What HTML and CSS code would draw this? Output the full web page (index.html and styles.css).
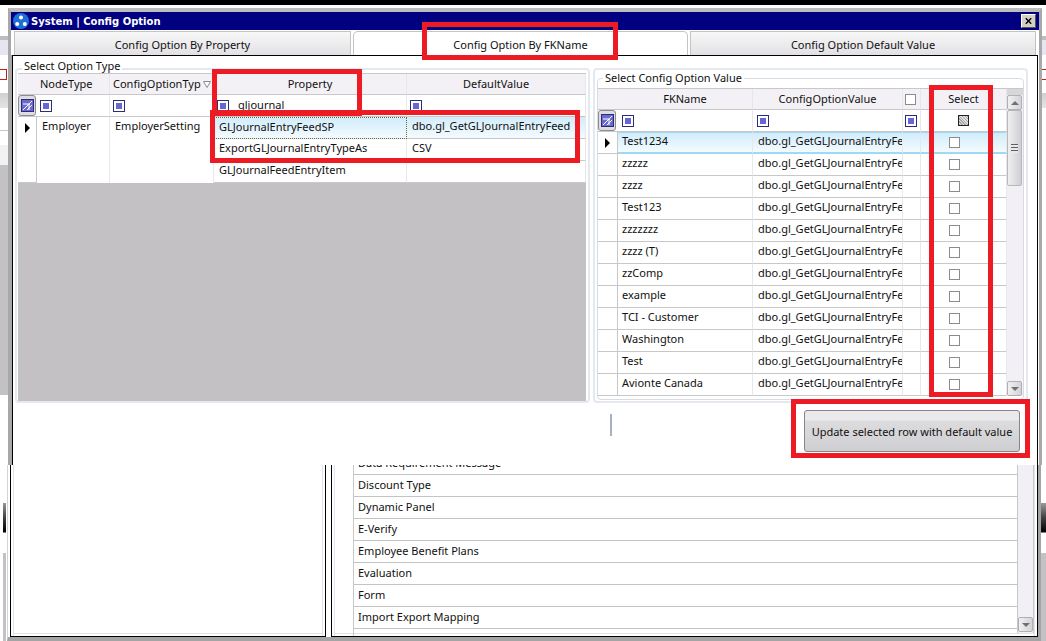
FILE: index.html
```html
<!DOCTYPE html>
<html lang="en">
<head>
    <meta charset="UTF-8">
    <meta name="viewport" content="width=device-width, initial-scale=1.0">
    <title>System | Config Option</title>
    <link rel="stylesheet" href="styles.css">
</head>
<body>
    <div class="top-strip"></div>
    <div class="edge edge-left"><span class="edge-mark"></span></div>
    <div class="edge edge-right"><span class="edge-mark"></span></div>
    <div class="edge-low edge-low-left"></div>
    <div class="edge-low edge-low-right"></div>

    <!-- window behind the dialog -->
    <div class="back-window">
        <div class="pane pane-left"></div>
        <div class="pane pane-right">
            <div class="list">
                <div class="list-row list-row-first">Data Requirement Message</div>
                <div class="list-row">Discount Type</div>
                <div class="list-row">Dynamic Panel</div>
                <div class="list-row">E-Verify</div>
                <div class="list-row">Employee Benefit Plans</div>
                <div class="list-row">Evaluation</div>
                <div class="list-row">Form</div>
                <div class="list-row">Import Export Mapping</div>
                <div class="list-row"></div>
            </div>
            <div class="list-scroll">
                <div class="scroll-btn"><span class="arrow-down"></span></div>
            </div>
        </div>
    </div>

    <!-- dialog -->
    <div class="dialog">
        <div class="titlebar">
            <svg class="logo" viewBox="0 0 16 16">
                <circle cx="8" cy="8" r="8" fill="#1f6fd8"/>
                <circle cx="8" cy="4.5" r="2" fill="#fff"/>
                <circle cx="4.2" cy="11" r="2" fill="#fff"/>
                <circle cx="11.8" cy="11" r="2" fill="#fff"/>
            </svg>
            <span class="title-text">System | Config Option</span>
            <button class="close-btn">
                <svg viewBox="0 0 9 8"><path d="M1 0.5 L8 7.5 M8 0.5 L1 7.5" stroke="#000" stroke-width="1.8"/></svg>
            </button>
        </div>

        <div class="tabs">
            <div class="tab tab-one">Config Option By Property</div>
            <div class="tab tab-two tab-active">Config Option By FKName</div>
            <div class="tab tab-three">Config Option Default Value</div>
        </div>

        <div class="panel">
            <div class="groups">
                <div class="group group-left">
                    <span class="legend legend-left">Select Option Type</span>
                    <div class="grid grid-left">
                        <table class="table table-left">
                            <colgroup>
                                <col class="c-sel">
                                <col class="c-node">
                                <col class="c-type">
                                <col class="c-prop">
                                <col class="c-default">
                            </colgroup>
                            <tr class="head">
                                <th class="blank"></th>
                                <th class="left">NodeType</th>
                                <th class="left">ConfigOptionTyp<svg class="funnel" viewBox="0 0 8 7"><path d="M0.5 0.5 H7.5 L4 6.5 Z" fill="#fff" stroke="#8a8a8a"/></svg></th>
                                <th>Property</th>
                                <th>DefaultValue</th>
                            </tr>
                            <tr class="filter">
                                <td class="sel">
                                    <span class="sel-btn">
                                        <svg viewBox="0 0 13 13"><rect x="0.5" y="0.5" width="12" height="12" fill="#6a6ad0" stroke="#2c2c78"/><path d="M2 11 L11 2 M6 11 L11 6 M2 5 H9 M8 5 V11" stroke="#fff" stroke-width="1" fill="none"/></svg>
                                    </span>
                                </td>
                                <td><span class="fbox"></span></td>
                                <td><span class="fbox"></span></td>
                                <td><span class="fbox"></span><span class="filter-text">gljournal</span></td>
                                <td><span class="fbox"></span></td>
                            </tr>
                            <tr class="row">
                                <td class="sel" rowspan="3"><span class="pointer"></span></td>
                                <td class="plain" rowspan="3">Employer</td>
                                <td class="plain" rowspan="3">EmployerSetting</td>
                                <td class="active focus">GLJournalEntryFeedSP</td>
                                <td class="active">dbo.gl_GetGLJournalEntryFeed</td>
                            </tr>
                            <tr class="row">
                                <td>ExportGLJournalEntryTypeAs</td>
                                <td>CSV</td>
                            </tr>
                            <tr class="row">
                                <td>GLJournalFeedEntryItem</td>
                                <td></td>
                            </tr>
                        </table>
                    </div>
                </div>

                <div class="group group-right">
                    <div class="group-inner">
                        <span class="legend legend-right">Select Config Option Value</span>
                        <div class="grid grid-right">
                            <table class="table table-right">
                                <colgroup>
                                    <col class="r-sel">
                                    <col class="r-name">
                                    <col class="r-value">
                                    <col class="r-check">
                                    <col class="r-select">
                                </colgroup>
                                <tr class="head">
                                    <th class="blank"></th>
                                    <th>FKName</th>
                                    <th>ConfigOptionValue</th>
                                    <th class="check-head"><span class="check head-check"></span></th>
                                    <th>Select</th>
                                </tr>
                                <tr class="filter">
                                    <td class="sel">
                                        <span class="sel-btn">
                                            <svg viewBox="0 0 13 13"><rect x="0.5" y="0.5" width="12" height="12" fill="#6a6ad0" stroke="#2c2c78"/><path d="M2 11 L11 2 M6 11 L11 6 M2 5 H9 M8 5 V11" stroke="#fff" stroke-width="1" fill="none"/></svg>
                                        </span>
                                    </td>
                                    <td><span class="fbox"></span></td>
                                    <td><span class="fbox"></span></td>
                                    <td class="check-head"><span class="fbox"></span></td>
                                    <td class="center"><span class="check check-on"></span></td>
                                </tr>
                                <tr class="row row-active">
                                    <td class="sel"><span class="pointer"></span></td>
                                    <td>Test1234</td>
                                    <td>dbo.gl_GetGLJournalEntryFe</td>
                                    <td></td>
                                    <td class="center"><span class="check"></span></td>
                                </tr>
                                <tr class="row"><td class="sel"></td><td>zzzzz</td><td>dbo.gl_GetGLJournalEntryFe</td><td></td><td class="center"><span class="check"></span></td></tr>
                                <tr class="row"><td class="sel"></td><td>zzzz</td><td>dbo.gl_GetGLJournalEntryFe</td><td></td><td class="center"><span class="check"></span></td></tr>
                                <tr class="row"><td class="sel"></td><td>Test123</td><td>dbo.gl_GetGLJournalEntryFe</td><td></td><td class="center"><span class="check"></span></td></tr>
                                <tr class="row"><td class="sel"></td><td>zzzzzzz</td><td>dbo.gl_GetGLJournalEntryFe</td><td></td><td class="center"><span class="check"></span></td></tr>
                                <tr class="row"><td class="sel"></td><td>zzzz (T)</td><td>dbo.gl_GetGLJournalEntryFe</td><td></td><td class="center"><span class="check"></span></td></tr>
                                <tr class="row"><td class="sel"></td><td>zzComp</td><td>dbo.gl_GetGLJournalEntryFe</td><td></td><td class="center"><span class="check"></span></td></tr>
                                <tr class="row"><td class="sel"></td><td>example</td><td>dbo.gl_GetGLJournalEntryFe</td><td></td><td class="center"><span class="check"></span></td></tr>
                                <tr class="row"><td class="sel"></td><td>TCI - Customer</td><td>dbo.gl_GetGLJournalEntryFe</td><td></td><td class="center"><span class="check"></span></td></tr>
                                <tr class="row"><td class="sel"></td><td>Washington</td><td>dbo.gl_GetGLJournalEntryFe</td><td></td><td class="center"><span class="check"></span></td></tr>
                                <tr class="row"><td class="sel"></td><td>Test</td><td>dbo.gl_GetGLJournalEntryFe</td><td></td><td class="center"><span class="check"></span></td></tr>
                                <tr class="row"><td class="sel"></td><td>Avionte Canada</td><td>dbo.gl_GetGLJournalEntryFe</td><td></td><td class="center"><span class="check"></span></td></tr>
                            </table>
                            <div class="scrollbar">
                                <div class="scroll-cap"></div>
                                <div class="scroll-btn"><span class="arrow-up"></span></div>
                                <div class="scroll-thumb"><span class="grip"></span></div>
                                <div class="scroll-track"></div>
                                <div class="scroll-btn"><span class="arrow-down"></span></div>
                            </div>
                        </div>
                    </div>
                </div>
            </div>

            <div class="actions">
                <span class="splitter"></span>
                <button class="update-btn">Update selected row with default value</button>
            </div>
        </div>
    </div>

    <!-- red annotation boxes drawn on top of the screenshot -->
    <div class="mark mark-tab"></div>
    <div class="mark mark-property"></div>
    <div class="mark mark-rows"></div>
    <div class="mark mark-select"></div>
    <div class="mark mark-button"></div>
</body>
</html>
```

FILE: styles.css
```css
* {
    box-sizing: border-box;
}
html, body {
    margin: 0;
    padding: 0;
}
body {
    position: relative;
    width: 1046px;
    height: 641px;
    overflow: hidden;
    background-color: white;
    color: #101010;
    font-family: "Noto Sans", Tahoma, sans-serif;
    font-size: 11px;
}

/* desktop behind the windows */
.top-strip {
    position: absolute;
    left: 0;
    top: 0;
    width: 100%;
    height: 5px;
    background-color: black;
}
.edge {
    position: absolute;
    top: 5px;
    height: 460px;
    width: 8px;
}
.edge-left {
    left: 0;
    background: linear-gradient(to bottom,
        #fff 0, #fff 31px, #bdbdbd 31px, #bdbdbd 35px,
        #e6e6f2 35px, #e6e6f2 50px, #fff 50px, #fff 88px,
        #d0d0d0 88px, #e4e4e4 103px, #fff 103px, #fff 125px,
        #c8c8c8 125px, #c8c8c8 126px, #fff 126px, #fff 140px,
        #f2f2f2 140px, #f2f2f2 160px, #c3c1c3 160px, #c3c1c3 390px,
        #fff 390px);
}
.edge-right {
    left: 1042px;
    width: 4px;
    background: linear-gradient(to bottom,
        #fff 0, #fff 31px, #bdbdbd 31px, #bdbdbd 35px,
        #e6e6f2 35px, #e6e6f2 50px, #fff 50px, #fff 88px,
        #d0d0d0 88px, #e4e4e4 103px, #fff 103px);
}
.edge-mark {
    position: absolute;
    left: 0;
    top: 64px;
    width: 7px;
    height: 11px;
    border-top: 1px solid #c02020;
    border-bottom: 1px solid #c02020;
    border-right: 1px solid #c02020;
}
.edge-low {
    position: absolute;
    top: 503px;
    height: 138px;
    width: 3px;
    background: linear-gradient(to bottom,
        #9a9a9a 0, #444 14px, #000 29px, #fff 30px, #fff 50px, #c3c1c3 50px);
}
.edge-low-left {
    left: 3px;
}
.edge-low-right {
    left: 1041px;
    width: 5px;
}

/* window behind the dialog */
.back-window {
    position: absolute;
    left: 7px;
    top: 465px;
    width: 1034px;
    height: 176px;
    display: flex;
    gap: 5px;
    padding-left: 2px;
    background-color: white;
    border-left: 1px solid #d4d4d4;
    border-right: 3px solid #a4a4a4;
    border-bottom: 4px solid #a4a4a4;
}
.pane {
    height: 172px;
    border: 1px solid black;
    border-top: none;
    box-shadow: inset 2px 0 0 #fff, inset 3px 0 0 #dde4ec, inset -2px 0 0 #fff, inset -3px 0 0 #dde4ec, inset 0 -2px 0 #fff, inset 0 -3px 0 #dde4ec;
}
.pane-left {
    width: 316px;
}
.pane-right {
    width: 707px;
    display: flex;
    padding-left: 21px;
}
.list {
    width: 664px;
    height: 171px;
    overflow: hidden;
    border-left: 1px solid #c8c8c8;
}
.list-row {
    height: 22px;
    line-height: 19px;
    padding-left: 4px;
    border-bottom: 1px solid #c4c4c4;
    white-space: nowrap;
}
.list-row-first {
    margin-top: -12px;
}
.list-scroll {
    width: 17px;
    height: 168px;
    display: flex;
    flex-direction: column;
    justify-content: flex-end;
    background-color: #f2f0f4;
    border-left: 1px solid #c8c8c8;
    border-right: 1px solid #c8c8c8;
    padding-bottom: 1px;
}

/* dialog */
.dialog {
    position: absolute;
    left: 8px;
    top: 8px;
    width: 1034px;
    height: 457px;
    overflow: hidden;
    background-color: white;
    border-top: 4px solid #bdbdbd;
    border-left: 3px solid #a8a8a8;
    border-right: 3px solid #a8a8a8;
}
.titlebar {
    height: 18px;
    margin-bottom: 1px;
    display: flex;
    align-items: center;
    background-color: #000080;
    color: white;
    padding-left: 2px;
}
.logo {
    width: 16px;
    height: 16px;
}
.title-text {
    margin-left: 2px;
    font-family: "DejaVu Sans", sans-serif;
    font-weight: bold;
    font-size: 10px;
}
.close-btn {
    margin-left: auto;
    margin-right: 3px;
    width: 15px;
    height: 14px;
    padding: 2px 3px;
    display: flex;
    background-color: #d4d0c8;
    border: 1px solid;
    border-color: #fff #555 #555 #fff;
}
.close-btn svg {
    width: 9px;
    height: 8px;
}

.tabs {
    display: flex;
    gap: 2px;
    height: 24px;
    padding-left: 3px;
}
.tab {
    height: 24px;
    line-height: 26px;
    text-align: center;
    background: linear-gradient(to bottom, #f8f8f8, #e2e0e4);
    border: 1px solid #c4c4c4;
    border-bottom: none;
}
.tab-one {
    width: 337px;
}
.tab-two {
    width: 335px;
}
.tab-three {
    width: 346px;
}
.tab-active {
    background: white;
    border-radius: 5px 5px 0 0;
}

.panel {
    width: 1026px;
    height: 410px;
    margin-left: 1px;
    background-color: white;
    border-top: 1px solid black;
    border-left: 1px solid black;
    border-right: 1px solid black;
    box-shadow: -1px 0 0 #a8a8a8;
}
.groups {
    display: flex;
    gap: 3px;
    padding-left: 2px;
    padding-top: 12px;
}
.group {
    position: relative;
    height: 335px;
    border: 2px solid #e4e9ef;
    border-radius: 4px;
}
.group-left {
    width: 575px;
}
.group-right {
    width: 435px;
}
.group-inner {
    position: relative;
    width: 427px;
    height: 322px;
    margin-left: 2px;
    margin-top: 8px;
    border: 1px solid #d5dce4;
    border-radius: 4px;
}
.legend {
    position: absolute;
    background-color: white;
    padding: 0 2px;
    line-height: 14px;
    white-space: nowrap;
}
.legend-left {
    left: 5px;
    top: -11px;
}
.legend-right {
    left: 5px;
    top: -8px;
}

/* grids */
.grid {
    border-top: 1px solid #c8c8c8;
}
.grid-left {
    width: 568px;
    height: 328px;
    margin-left: 1px;
    margin-top: 3px;
    background-color: #c3c1c3;
}
.grid-right {
    display: flex;
    width: 425px;
    height: 308px;
    margin-top: 9px;
    background-color: white;
}
.table {
    table-layout: fixed;
    border-collapse: separate;
    border-spacing: 0;
    background-color: white;
}
.table-left {
    width: 568px;
}
.table-right {
    width: 409px;
}
.c-sel { width: 19px; }
.c-node { width: 73px; }
.c-type { width: 104px; }
.c-prop { width: 193px; }
.c-default { width: 179px; }
.r-sel { width: 20px; }
.r-name { width: 135px; }
.r-value { width: 150px; }
.r-check { width: 18px; }
.r-select { width: 86px; }

th, td {
    padding: 0;
    font-weight: normal;
    white-space: nowrap;
    overflow: hidden;
}
th {
    height: 21px;
    padding-bottom: 2px;
    text-align: center;
    background-color: #f3f1f5;
    border-right: 1px solid #e6e6ea;
    border-bottom: 1px solid #c8c8c8;
}
th.blank {
    border-right: none;
}
th.left {
    text-align: left;
    padding-left: 3px;
}
td {
    height: 22px;
    padding-left: 5px;
    border-right: 1px solid #e6e8ec;
    border-bottom: 1px solid #c8c8c8;
}
.row td {
    padding-bottom: 4px;
}
.table-right td {
    padding-left: 4px;
}
.table-right .row td:nth-child(3) {
    padding-left: 5px;
}
.table td.sel {
    padding: 0;
    text-align: center;
    vertical-align: top;
    border-right: 1px solid #c8c8c8;
}
.table td.plain {
    vertical-align: top;
    padding-top: 1px;
    border-bottom: none;
}
.filter td {
    padding-left: 3px;
    line-height: 0;
}
.table-right .filter td {
    padding-left: 4px;
}
.table .filter td.sel {
    padding: 0;
    border-right: none;
}
.table td.center {
    padding: 0;
    text-align: center;
    line-height: 0;
}
.table td.check-head,
.table th.check-head {
    padding-left: 2px;
    padding-bottom: 0;
    text-align: left;
    line-height: 0;
}
.funnel {
    width: 8px;
    height: 7px;
    margin-left: 2px;
}
.sel-btn {
    display: flex;
    align-items: center;
    justify-content: center;
    width: 18px;
    height: 21px;
    background-color: #dedee2;
    border: 1px solid #8c8c94;
    border-radius: 3px;
}
.sel-btn svg {
    width: 13px;
    height: 13px;
}
.fbox {
    display: inline-block;
    vertical-align: middle;
    width: 12px;
    height: 12px;
    padding: 2px;
    background-color: #6666d6;
    background-clip: content-box;
    border: 1px solid #2c2c78;
}
.filter-text {
    display: inline-block;
    vertical-align: middle;
    margin-left: 9px;
    margin-bottom: 2px;
    line-height: 14px;
}
.pointer {
    display: inline-block;
    margin-top: 6px;
    width: 0;
    height: 0;
    border-top: 5px solid transparent;
    border-bottom: 5px solid transparent;
    border-left: 5px solid black;
}
.active {
    background: linear-gradient(to bottom, #d2ecfb, #f4fbff);
}
.focus {
    border: 1px dotted #6a6a30;
    border-left: none;
    border-right: 1px dotted #6a6a30;
}
.table .row-active td {
    background: linear-gradient(to bottom, #d2ecfb, #f4fbff);
    border-top: 1px solid #a0daf2;
    border-bottom: 2px solid #a0daf2;
}
.table .row-active td.sel {
    background: white;
    border-top: none;
    border-bottom: 1px solid #c8c8c8;
}
.check {
    display: inline-block;
    vertical-align: middle;
    width: 11px;
    height: 11px;
    margin-right: 18px;
    background-color: white;
    border: 1px solid #8c8c8c;
}
.head-check {
    margin-right: 0;
}
.check-on {
    margin-right: 0;
    background: repeating-linear-gradient(45deg, #a8a8a8, #a8a8a8 1px, #e2e2e2 1px, #e2e2e2 2px);
    border-color: #222;
}

/* scrollbars */
.scrollbar {
    width: 16px;
    display: flex;
    flex-direction: column;
    background-color: #f2f0f4;
}
.scroll-cap {
    height: 6px;
    background-color: #d8d6d8;
}
.scroll-btn {
    flex: none;
    display: flex;
    align-items: center;
    justify-content: center;
    width: 15px;
    height: 15px;
    background: linear-gradient(to right, #f0f0f2, #d4d4d8);
    border: 1px solid #b0b0b4;
    border-radius: 2px;
}
.scroll-thumb {
    flex: none;
    display: flex;
    align-items: center;
    justify-content: center;
    width: 15px;
    height: 76px;
    background: linear-gradient(to right, #f0f0f2, #cfcfd3);
    border: 1px solid #b8b8bc;
    border-radius: 2px;
}
.scroll-track {
    flex: 1;
}
.arrow-up,
.arrow-down {
    width: 0;
    height: 0;
    border-left: 4px solid transparent;
    border-right: 4px solid transparent;
}
.arrow-up {
    border-bottom: 4px solid #707074;
}
.arrow-down {
    border-top: 4px solid #707074;
}
.grip {
    width: 7px;
    height: 9px;
    background: repeating-linear-gradient(to bottom, #606064, #606064 1px, #e8e8ea 1px, #e8e8ea 3px);
}

/* button row */
.actions {
    display: flex;
    align-items: flex-start;
    padding-top: 7px;
    padding-left: 597px;
    padding-right: 17px;
}
.splitter {
    width: 2px;
    height: 22px;
    margin-top: 4px;
    background-color: #a8b0c4;
}
.update-btn {
    margin-left: auto;
    width: 216px;
    height: 42px;
    padding: 0;
    font-family: inherit;
    font-size: 11px;
    color: #101010;
    background: linear-gradient(to bottom, #eaeaec 0, #eaeaec 9px, #dcdcde 10px, #cfcfd3 100%);
    border: 1px solid #85858a;
    border-radius: 3px;
}

/* red boxes */
.mark {
    position: absolute;
    border: 5px solid #ed1c24;
}
.mark-tab {
    left: 422px;
    top: 22px;
    width: 196px;
    height: 38px;
}
.mark-property {
    left: 212px;
    top: 69px;
    width: 150px;
    height: 47px;
}
.mark-rows {
    left: 210px;
    top: 110px;
    width: 370px;
    height: 53px;
}
.mark-select {
    left: 929px;
    top: 85px;
    width: 64px;
    height: 312px;
}
.mark-button {
    left: 791px;
    top: 399px;
    width: 239px;
    height: 59px;
}
```
